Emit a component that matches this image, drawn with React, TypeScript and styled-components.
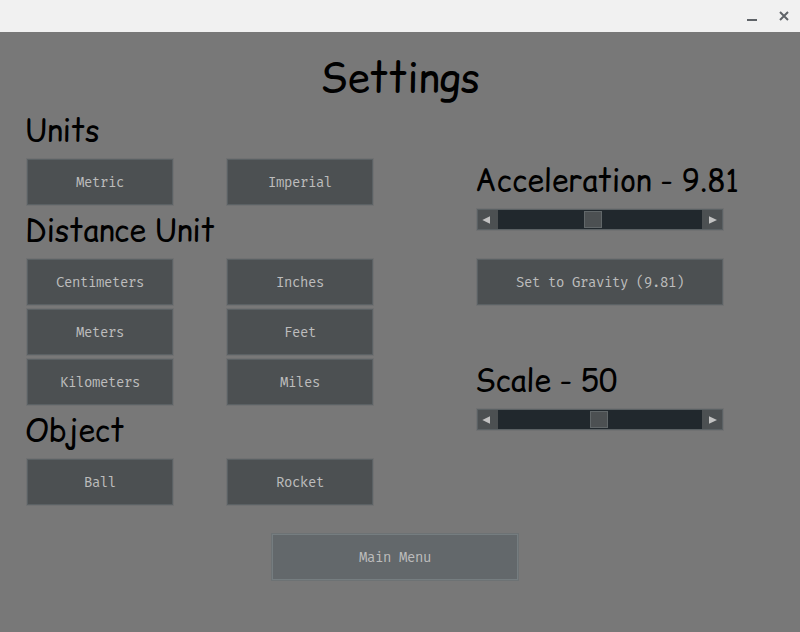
import React, { useState } from "react";
import styled, { createGlobalStyle } from "styled-components";

const GlobalStyle = createGlobalStyle`
  * { box-sizing: border-box; }
  body { margin: 0; background: #787878; }
`;

const Window = styled.div`
  display: flex;
  flex-direction: column;
  width: 800px;
  height: 632px;
  overflow: hidden;
  background: #787878;
`;

const TitleBar = styled.header`
  display: flex;
  flex: none;
  justify-content: flex-end;
  height: 32px;
  background: #f1f1f1;
`;

const WindowControl = styled.button`
  display: grid;
  place-items: center;
  width: 32px;
  height: 32px;
  padding: 0;
  border: 0;
  background: none;
`;

const Screen = styled.main`
  display: flex;
  flex-direction: column;
  height: 600px;
  padding: 15px 25px 0;
`;

const Heading = styled.h2`
  margin: 0;
  height: 50px;
  color: #000;
  font: 400 30px/46px "Comic Sans MS", "Comic Relief", "Comic Neue", "Noto Sans", sans-serif;
  font-variant-ligatures: none;
  letter-spacing: -0.1px;
  white-space: nowrap;
`;

const Title = styled(Heading).attrs({ as: "h1" })`
  height: 60px;
  font-size: 40px;
  line-height: 62px;
  letter-spacing: 0;
  text-align: center;
`;

const Columns = styled.div`
  display: grid;
  grid-template-columns: 350px 265px;
  column-gap: 100px;
  height: 425px;
`;

const Choices = styled.section`
  display: grid;
  grid-template-columns: 150px 150px;
  grid-auto-rows: 50px;
  column-gap: 50px;
  align-content: start;

  ${Heading} { grid-column: 1 / -1; }
`;

const Controls = styled.section`
  display: flex;
  flex-direction: column;
  padding-top: 50px;
`;

const Button = styled.button<{ $wide?: boolean; $lit?: boolean }>`
  flex: none;
  width: ${(p) => (p.$wide ? 246 : 146)}px;
  height: 46px;
  margin: 2px;
  padding: 1px 0 0;
  border: 1px solid ${(p) => (p.$lit ? "#757d80" : "#5b6164")};
  background: ${(p) => (p.$lit ? "#63686b" : "#4c5052")};
  box-shadow: 0 0 0 1px ${(p) => (p.$lit ? "#6d7274" : "#707172")};
  color: ${(p) => (p.$lit ? "#bcbcbc" : "#bdbdbd")};
  font: 14px/43px "Fira Mono", "Fira Code", "DejaVu Sans Mono", monospace;
  letter-spacing: -0.4px;
`;

const SliderFrame = styled.div`
  display: flex;
  flex: none;
  width: 246px;
  height: 21px;
  margin: 2px 2px 27px;
  border: 1px solid #5b6164;
  background: #4c5052;
  box-shadow: 0 0 0 1px #707172;
`;

const ArrowButton = styled.button`
  display: grid;
  place-items: center;
  width: 20px;
  height: 19px;
  padding: 0;
  border: 0;
  background: #4c5052;
`;

const Track = styled.div`
  flex: 1;
  padding-top: 1px;
  background: #21282d;
`;

const Thumb = styled.div`
  width: 18px;
  height: 17px;
  border: 1px solid #616769;
  background: #4c5052;
`;

const Gap = styled.div`
  height: 50px;
`;

const Footer = styled.footer`
  display: flex;
  padding-left: 245px;
`;

function Arrow({ right }: { right?: boolean }) {
  return (
    <svg width="20" height="19" viewBox="0 0 20 19">
      <path d={right ? "M7 6.2 15 10 7 13.8Z" : "M12 6.2 4.3 10l7.7 3.8Z"} fill="#c2c2c2" />
    </svg>
  );
}

function Slider({ offset, onStep }: { offset: number; onStep: (d: number) => void }) {
  return (
    <SliderFrame>
      <ArrowButton aria-label="Decrease" onClick={() => onStep(-1)}><Arrow /></ArrowButton>
      <Track><Thumb style={{ marginLeft: offset }} /></Track>
      <ArrowButton aria-label="Increase" onClick={() => onStep(1)}><Arrow right /></ArrowButton>
    </SliderFrame>
  );
}

export default function App() {
  const [acceleration, setAcceleration] = useState(9.81);
  const [scale, setScale] = useState(50);

  return (
    <Window>
      <GlobalStyle />
      <TitleBar>
        <WindowControl aria-label="Minimize">
          <svg width="32" height="32"><path d="M11 19h10v2H11z" fill="#5f6368" /></svg>
        </WindowControl>
        <WindowControl aria-label="Close">
          <svg width="32" height="32"><path d="m12 12 8 8m0-8-8 8" stroke="#5f6368" strokeWidth="2" /></svg>
        </WindowControl>
      </TitleBar>
      <Screen>
        <Title>Settings</Title>
        <Columns>
          <Choices>
            <Heading>Units</Heading>
            <Button>Metric</Button>
            <Button>Imperial</Button>
            <Heading>Distance Unit</Heading>
            <Button>Centimeters</Button>
            <Button>Inches</Button>
            <Button>Meters</Button>
            <Button>Feet</Button>
            <Button>Kilometers</Button>
            <Button>Miles</Button>
            <Heading>Object</Heading>
            <Button>Ball</Button>
            <Button>Rocket</Button>
          </Choices>
          <Controls>
            <Heading>Acceleration - {acceleration.toFixed(2)}</Heading>
            <Slider offset={86 + (acceleration - 9.81) * 9} onStep={(d) => setAcceleration((v) => v + d)} />
            <Button $wide onClick={() => setAcceleration(9.81)}>Set to Gravity (9.81)</Button>
            <Gap />
            <Heading>Scale - {scale}</Heading>
            <Slider offset={92 + (scale - 50) * 1.8} onStep={(d) => setScale((v) => v + d)} />
          </Controls>
        </Columns>
        <Footer><Button $wide $lit>Main Menu</Button></Footer>
      </Screen>
    </Window>
  );
}
